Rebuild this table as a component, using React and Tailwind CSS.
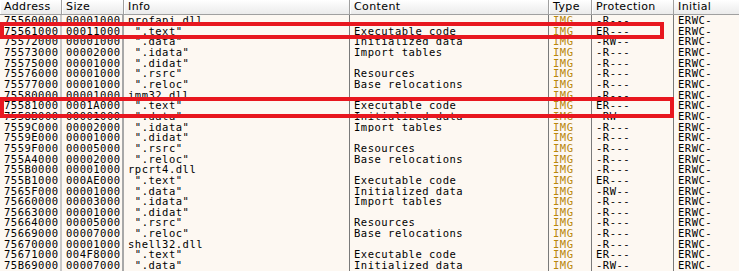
import React from "react";

const rows = [
  ["75560000", "00001000", "profapi.dll", "", "-R---"],
  ["75561000", "00011000", ' ".text"', "Executable code", "ER---"],
  ["75572000", "00001000", ' ".data"', "Initialized data", "-RW--"],
  ["75573000", "00002000", ' ".idata"', "Import tables", "-R---"],
  ["75575000", "00001000", ' ".didat"', "", "-R---"],
  ["75576000", "00001000", ' ".rsrc"', "Resources", "-R---"],
  ["75577000", "00001000", ' ".reloc"', "Base relocations", "-R---"],
  ["75580000", "00001000", "imm32.dll", "", "-R---"],
  ["75581000", "0001A000", ' ".text"', "Executable code", "ER---"],
  ["7558B000", "00001000", ' ".data"', "Initialized data", "-RW--"],
  ["7559C000", "00002000", ' ".idata"', "Import tables", "-R---"],
  ["7559E000", "00001000", ' ".didat"', "", "-R---"],
  ["7559F000", "00005000", ' ".rsrc"', "Resources", "-R---"],
  ["755A4000", "00002000", ' ".reloc"', "Base relocations", "-R---"],
  ["755B0000", "00001000", "rpcrt4.dll", "", "-R---"],
  ["755B1000", "000AE000", ' ".text"', "Executable code", "ER---"],
  ["7565F000", "00001000", ' ".data"', "Initialized data", "-RW--"],
  ["75660000", "00003000", ' ".idata"', "Import tables", "-R---"],
  ["75663000", "00001000", ' ".didat"', "", "-R---"],
  ["75664000", "00005000", ' ".rsrc"', "Resources", "-R---"],
  ["75669000", "00007000", ' ".reloc"', "Base relocations", "-R---"],
  ["75670000", "00001000", "shell32.dll", "", "-R---"],
  ["75671000", "004F8000", ' ".text"', "Executable code", "ER---"],
  ["75B69000", "00007000", ' ".data"', "Initialized data", "-RW--"],
];

const grid = "grid grid-cols-[62px_62px_226px_199px_43px_82px_1fr]";
const headCell = "pl-[4px] border-r border-[#a0a0a0] shadow-[inset_1px_0_0_#ffffff]";
const cell = "pl-[4px] whitespace-pre overflow-hidden";

const App = () => {
  return (
    <div className="relative w-[739px] h-[271px] overflow-hidden bg-[#fdf8f2]">
      <div
        className={`${grid} h-[15px] bg-gradient-to-b from-[#ffffff] to-[#ebebeb] border-b border-[#a0a0a0] text-[11px] tracking-[0.4px] leading-[14px] text-black`}
        style={{ fontFamily: '"DejaVu Sans", Verdana, sans-serif' }}
      >
        <div className={headCell}>Address</div>
        <div className={headCell}>Size</div>
        <div className={headCell}>Info</div>
        <div className={headCell}>Content</div>
        <div className={headCell}>Type</div>
        <div className={headCell}>Protection</div>
        <div className="pl-[4px]">Initial</div>
      </div>

      <div
        className="text-[10.5px] tracking-[0.5px] leading-[10.67px] text-black"
        style={{ fontFamily: '"DejaVu Sans Mono", monospace' }}
      >
        {rows.map((r) => (
          <div key={r[0]} className={`${grid} h-[10.67px]`}>
            <div className={`${cell} border-r-2 border-[#c8c8c8]`}>{r[0]}</div>
            <div className={`${cell} border-r-2 border-[#a8a8a8]`}>{r[1]}</div>
            <div className={`${cell} border-r border-[#7a7a7a]`}>{r[2]}</div>
            <div className={`${cell} border-r border-[#7a7a7a]`}>{r[3]}</div>
            <div className={`${cell} border-r border-[#7a7a7a] text-[#b8860b]`}>IMG</div>
            <div className={`${cell} border-r border-[#7a7a7a]`}>{r[4]}</div>
            <div className={cell}>ERWC-</div>
          </div>
        ))}
      </div>

      <div className="absolute left-0 top-[22px] w-[664px] h-[17px] border-4 border-[#e8171f]" />
      <div className="absolute left-0 top-[97px] w-[674px] h-[21px] border-4 border-[#e8171f]" />
    </div>
  );
};

export default App;
